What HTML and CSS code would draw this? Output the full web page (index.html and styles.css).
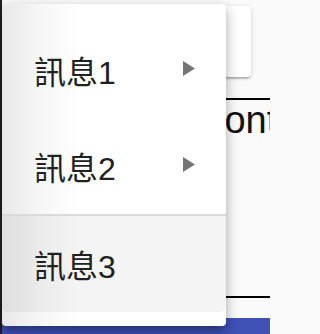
FILE: index.html
```html
<!DOCTYPE html>
<html lang="zh-Hant">
<head>
<meta charset="utf-8">
<title>Menu</title>
<link rel="stylesheet" href="styles.css">
</head>
<body>
<div class="app">
  <div class="edge"></div>
  <main class="main">
    <div class="card"></div>
    <section class="content">
      <p class="content-text">Content</p>
    </section>
    <div class="toolbar"></div>
  </main>
  <div class="menu">
    <div class="item">
      <span class="label">訊息1</span>
      <svg class="arrow" width="12" height="15" viewBox="0 0 12 15"><polygon points="0,0 12,7.5 0,15" fill="#757575"/></svg>
    </div>
    <div class="item">
      <span class="label">訊息2</span>
      <svg class="arrow" width="12" height="15" viewBox="0 0 12 15"><polygon points="0,0 12,7.5 0,15" fill="#757575"/></svg>
    </div>
    <div class="sep"></div>
    <div class="item item-active">
      <span class="label">訊息3</span>
    </div>
  </div>
</div>
</body>
</html>
```

FILE: styles.css
```css
html, body {
  margin: 0;
  padding: 0;
  height: 100%;
}
body {
  background: #fafafa;
  overflow: hidden;
  font-family: "Liberation Sans", "Noto Sans CJK TC", sans-serif;
}
.app {
  position: relative;
  display: flex;
  width: 270px;
  height: 334px;
  overflow: hidden;
  background: #fafafa;
}
.edge {
  width: 2px;
  flex: none;
  background: #202020;
}
.main {
  flex: 1;
  display: flex;
  flex-direction: column;
  padding-top: 6px;
  min-width: 0;
}
.card {
  flex: none;
  margin: 0 19px 0 16px;
  height: 71px;
  background: #fff;
  border-radius: 4px;
  box-shadow: 0 3px 2px -2px rgba(0,0,0,.2), 0 2px 2px rgba(0,0,0,.14), 0 1px 5px rgba(0,0,0,.12);
}
.content {
  flex: none;
  margin-top: 21px;
  height: 196px;
  border-top: 2px solid #000;
  border-bottom: 2px solid #000;
  overflow: hidden;
}
.content-text {
  margin: 0;
  padding-left: 195px;
  font-size: 38px;
  line-height: 40px;
  color: #111;
  white-space: nowrap;
}
.toolbar {
  flex: none;
  margin-top: 20px;
  height: 64px;
  background: #3f51b5;
}
.menu {
  position: absolute;
  left: 2px;
  top: 4px;
  width: 224px;
  padding: 18px 0 14px;
  border-radius: 4px;
  background: linear-gradient(to right, #e8e8e8, #f7f7f7 40px, #fff 80px);
  box-shadow: 0 5px 6px -3px rgba(0,0,0,.2), 0 8px 12px 1px rgba(0,0,0,.14), 0 3px 14px 2px rgba(0,0,0,.12);
}
.item {
  display: flex;
  align-items: center;
  justify-content: space-between;
  height: 96px;
  padding: 0 31px 0 32px;
  font-size: 32px;
  color: #212121;
}
.item-active {
  background: rgba(0,0,0,.045);
  border-radius: 0 0 6px 6px;
}
.arrow {
  display: block;
  margin-top: -3px;
}
.sep {
  height: 2px;
  background: #dadada;
}
```
